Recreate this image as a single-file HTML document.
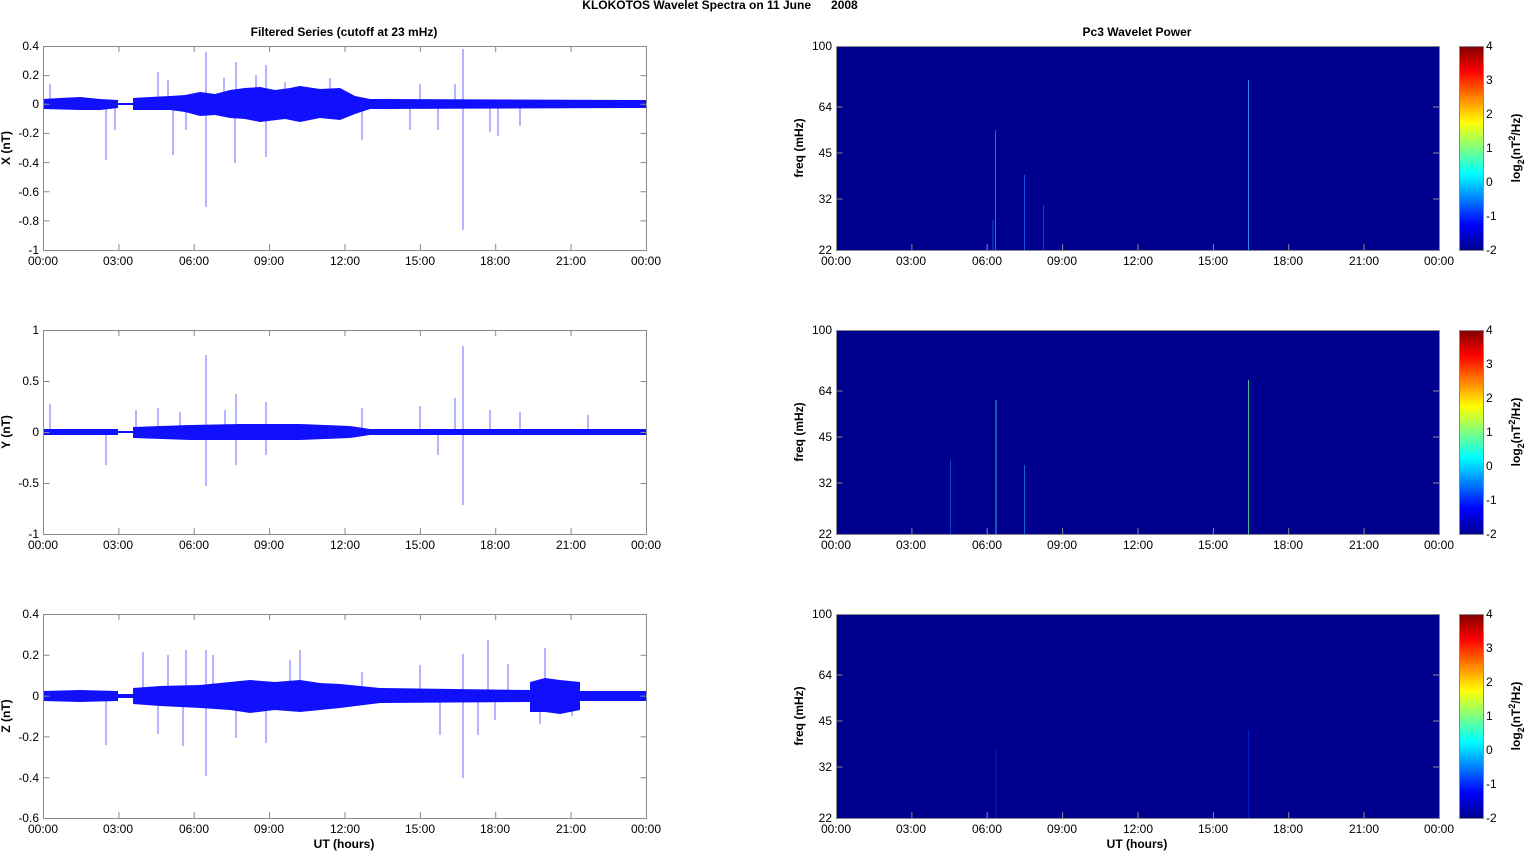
<!DOCTYPE html>
<html><head><meta charset="utf-8"><style>
html,body{margin:0;padding:0;background:#fff;}
svg{display:block;font-family:"Liberation Sans",Arial,sans-serif;}
.t{font-size:12px;fill:#000;}
.b{font-size:12px;font-weight:bold;fill:#000;}
.ax{fill:none;stroke:#8a8a8a;stroke-width:1;}
.tk{stroke:#8a8a8a;stroke-width:1;}
.sp{stroke:#6a6aff;stroke-width:1;fill:none;}
.env{fill:#1010ff;}
</style></head><body>
<svg width="1526" height="851" viewBox="0 0 1526 851">
<defs>
<linearGradient id="jet" x1="0" y1="1" x2="0" y2="0">
<stop offset="0" stop-color="#00008f"/>
<stop offset="0.125" stop-color="#0000ff"/>
<stop offset="0.375" stop-color="#00ffff"/>
<stop offset="0.625" stop-color="#ffff00"/>
<stop offset="0.875" stop-color="#ff0000"/>
<stop offset="1" stop-color="#800000"/>
</linearGradient>
<g id="xt">
<path class="tk" d="M43.5 0v-6M118.9 0v-6M194.2 0v-6M269.6 0v-6M345 0v-6M420.4 0v-6M495.7 0v-6M571.1 0v-6M646.5 0v-6"/>
<text class="t" text-anchor="middle" y="15"><tspan x="43">00:00</tspan><tspan x="118">03:00</tspan><tspan x="194">06:00</tspan><tspan x="269">09:00</tspan><tspan x="345">12:00</tspan><tspan x="420">15:00</tspan><tspan x="495">18:00</tspan><tspan x="571">21:00</tspan><tspan x="646">00:00</tspan></text>
</g>
<g id="xt2">
<path class="tk" d="M43.5 0v6M118.9 0v6M194.2 0v6M269.6 0v6M345 0v6M420.4 0v6M495.7 0v6M571.1 0v6M646.5 0v6"/>
</g>
<g id="spec">
<rect x="836" y="0" width="603" height="204" fill="#00008f"/>
<rect x="836.5" y="0.5" width="603" height="204" class="ax" stroke="#333"/>
<path class="tk" d="M836.5 61h6M836.5 107h6M836.5 153h6M1433 61h6M1433 107h6M1433 153h6"/>
<text class="t" text-anchor="end"><tspan x="832" y="4">100</tspan><tspan x="832" y="65">64</tspan><tspan x="832" y="111">45</tspan><tspan x="832" y="157">32</tspan><tspan x="832" y="208">22</tspan></text>
<g transform="translate(793,0)"><use href="#xt" y="204"/></g>
<text class="b" transform="translate(803,102) rotate(-90)" text-anchor="middle">freq (mHz)</text>
<rect x="1459" y="0" width="24" height="204" fill="url(#jet)"/>
<rect x="1459.5" y="0.5" width="24" height="204" class="ax"/>
<text class="t"><tspan x="1486" y="4">4</tspan><tspan x="1486" y="38">3</tspan><tspan x="1486" y="72">2</tspan><tspan x="1486" y="106">1</tspan><tspan x="1486" y="140">0</tspan><tspan x="1486" y="174">-1</tspan><tspan x="1486" y="208">-2</tspan></text>
<text class="b" transform="translate(1520,102) rotate(-90)" text-anchor="middle">log<tspan font-size="9" dy="4">2</tspan><tspan dy="-4">(nT</tspan><tspan font-size="9" dy="-5">2</tspan><tspan dy="5">/Hz)</tspan></text>
</g>
</defs>

<text class="b" x="720" y="9" text-anchor="middle">KLOKOTOS Wavelet Spectra on 11 June&#160;&#160;&#160;&#160;&#160;&#160;2008</text>
<text class="b" x="344" y="36" text-anchor="middle">Filtered Series (cutoff at 23 mHz)</text>
<text class="b" x="1137" y="36" text-anchor="middle">Pc3 Wavelet Power</text>

<!-- Panel 1 X -->
<path class="sp" d="M106 104V160M206 104V207M206 104V52M463 104V49M463 104V230M236 104V62M266 104V65M173 104V155M235 104V163M266 104V157M362 104V140M158 104V72M168 104V80M186 104V130M224 104V78M256 104V75M285 104V82M330 104V78M410 104V130M420 104V84M438 104V130M455 104V84M490 104V132M498 104V136M520 104V126M115 104V130M50 104V84"/>
<polygon class="env" points="43,99 60,98 80,97 100,99 118,100 118,103 133,103 133,98 150,97 170,96 185,95 200,92 215,94 230,90 245,88 260,87 275,90 290,88 300,86 320,89 340,88 355,96 370,99 646,100 646,108 370,109 355,114 340,120 320,118 300,122 285,119 260,122 245,119 230,118 215,115 200,116 185,112 170,110 133,110 133,105 118,105 118,108 100,110 80,110 43,109"/>
<rect x="43.5" y="46.5" width="603" height="204" class="ax"/>
<path class="tk" d="M43.5 75.6h6M43.5 104.3h6M43.5 133.4h6M43.5 162.6h6M43.5 191.7h6M43.5 220.9h6M640.5 75.6h6M640.5 104.3h6M640.5 133.4h6M640.5 162.6h6M640.5 191.7h6M640.5 220.9h6"/>
<use href="#xt" y="250"/><use href="#xt2" y="46"/>
<text class="t" text-anchor="end"><tspan x="39" y="50">0.4</tspan><tspan x="39" y="79">0.2</tspan><tspan x="39" y="108">0</tspan><tspan x="39" y="137">-0.2</tspan><tspan x="39" y="167">-0.4</tspan><tspan x="39" y="196">-0.6</tspan><tspan x="39" y="225">-0.8</tspan><tspan x="39" y="254">-1</tspan></text>
<text class="b" transform="translate(10,148) rotate(-90)" text-anchor="middle">X (nT)</text>

<!-- Panel 2 Y -->
<path class="sp" d="M106 432V465M206 432V355M206 432V486M463 432V346M463 432V505M50 432V404M136 432V410M158 432V408M180 432V412M236 432V394M236 432V465M266 432V402M266 432V455M362 432V408M420 432V406M438 432V455M455 432V398M490 432V410M520 432V412M588 432V415M225 432V410"/>
<polygon class="env" points="43,429 118,429 118,431 133,431 133,427 190,425 240,424 300,424 350,426 370,429 646,429 646,435 370,435 350,438 300,440 240,440 190,440 133,438 133,433 118,433 118,435 43,435"/>
<rect x="43.5" y="330.5" width="603" height="204" class="ax"/>
<path class="tk" d="M43.5 381.5h6M43.5 432.5h6M43.5 483.5h6M640.5 381.5h6M640.5 432.5h6M640.5 483.5h6"/>
<use href="#xt" y="534"/><use href="#xt2" y="330"/>
<text class="t" text-anchor="end"><tspan x="39" y="334">1</tspan><tspan x="39" y="385">0.5</tspan><tspan x="39" y="436">0</tspan><tspan x="39" y="487">-0.5</tspan><tspan x="39" y="538">-1</tspan></text>
<text class="b" transform="translate(10,432) rotate(-90)" text-anchor="middle">Y (nT)</text>

<!-- Panel 3 Z -->
<path class="sp" d="M106 696V745M206 696V776M206 696V650M463 696V778M463 696V654M488 696V640M545 696V648M143 696V652M158 696V734M168 696V655M183 696V746M186 696V650M213 696V655M236 696V738M266 696V743M290 696V660M300 696V650M362 696V672M420 696V665M440 696V735M478 696V735M495 696V720M508 696V664M540 696V724M572 696V716"/>
<polygon class="env" points="43,691 80,690 118,691 118,694 133,694 133,688 160,686 200,685 230,682 250,680 275,682 300,680 320,683 340,684 380,688 530,690 530,682 545,678 560,680 580,682 580,691 646,691 646,701 580,701 580,710 560,714 545,712 530,712 530,702 380,703 340,708 320,710 300,712 275,710 250,713 230,710 200,708 160,706 133,704 133,698 118,698 118,701 80,702 43,701"/>
<rect x="43.5" y="614.5" width="603" height="204" class="ax"/>
<path class="tk" d="M43.5 655.3h6M43.5 696.1h6M43.5 736.9h6M43.5 777.7h6M640.5 655.3h6M640.5 696.1h6M640.5 736.9h6M640.5 777.7h6"/>
<use href="#xt" y="818"/><use href="#xt2" y="614"/>
<text class="t" text-anchor="end"><tspan x="39" y="618">0.4</tspan><tspan x="39" y="659">0.2</tspan><tspan x="39" y="700">0</tspan><tspan x="39" y="741">-0.2</tspan><tspan x="39" y="782">-0.4</tspan><tspan x="39" y="822">-0.6</tspan></text>
<text class="b" transform="translate(10,716) rotate(-90)" text-anchor="middle">Z (nT)</text>
<text class="b" x="344" y="848" text-anchor="middle">UT (hours)</text>

<!-- Spectra -->
<use href="#spec" y="46"/>
<use href="#spec" y="330"/>
<use href="#spec" y="614"/>
<g stroke-width="1">
<path d="M993 220V250" stroke="#0050e0"/>
<path d="M995.5 130V250" stroke="#1070f0"/>
<path d="M1024.5 175V250" stroke="#1050e0"/>
<path d="M1043.5 205V250" stroke="#1040d0"/>
<path d="M1248.5 80V250" stroke="#2090f0"/>
<path d="M950.5 460V534" stroke="#1040d0"/>
<path d="M996 400V534" stroke="#30b0d0"/>
<path d="M1024.5 465V534" stroke="#1060e0"/>
<path d="M1248.5 380V534" stroke="#40c0a0"/>
<path d="M996 750V818" stroke="#0020c0"/>
<path d="M1248.5 730V818" stroke="#0020c0"/>
</g>
<text class="b" x="1137" y="848" text-anchor="middle">UT (hours)</text>
</svg>
</body></html>
